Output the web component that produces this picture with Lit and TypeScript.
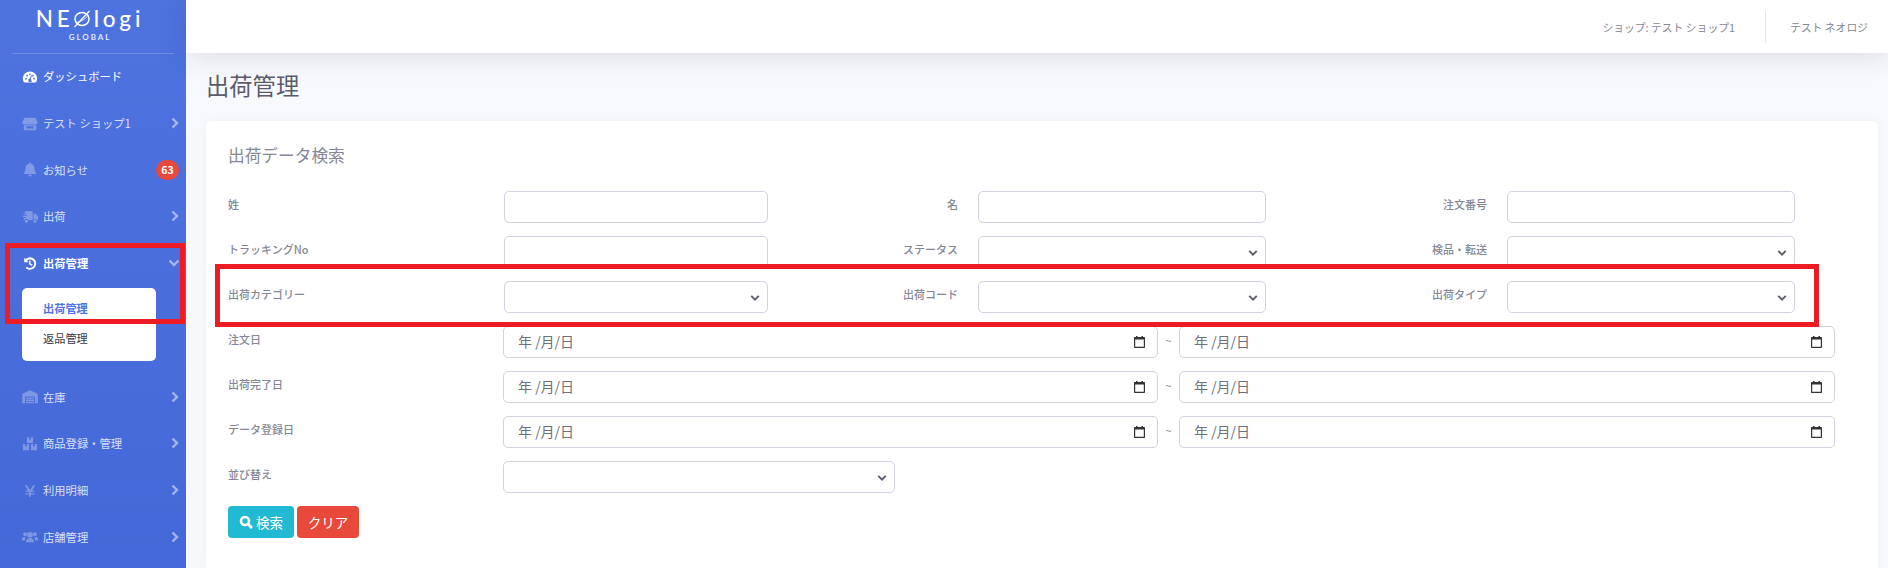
import { LitElement, html, css, svg } from "lit";
import { customElement } from "lit/decorators.js";

const ICONS: Record<string, any> = {
  gauge: svg`<path d="M9 2.500C4.600 2.500 1 6.100 1 10.500c0 1.400.4 2.700 1 3.800.2.300.5.400.8.400h12.400c.3 0 .6-.1.8-.4.6-1.100 1-2.400 1-3.800 0-4.400-3.600-8-8-8zM9 4.500a1 1 0 110 2 1 1 0 010-2zM4.500 11.500a1 1 0 110-2 1 1 0 010 2zm1.200-3.400a1 1 0 110-2 1 1 0 010 2zm5.200 4.900c0 .6-.2 1-.6 1.200H7.700C7.300 12.800 7.100 12.400 7.100 12c0-1 .8-1.800 1.700-1.800l1.400-3.400c.1-.3.4-.4.7-.3.3.1.4.4.3.7l-1.400 3.400c.4.4.6.9.6 1.400zm1.400-4.900a1 1 0 110-2 1 1 0 010 2zM13.500 11.500a1 1 0 110-2 1 1 0 010 2z" fill-rule="evenodd"/>`,
  store: svg`<path d="M3.500 1.500h11c.5 0 1 .3 1.200.8L17.500 6.500c.3 1.200-.6 2.500-2 2.500H2.500c-1.400 0-2.300-1.300-2-2.500l1.800-4.200c.2-.5.7-.8 1.200-.8zM2 10h14v4.500c0 .6-.4 1-1 1H3c-.6 0-1-.4-1-1zm3 1v2.500h8V11z" fill-rule="evenodd"/>`,
  bell: svg`<path d="M7 16a2 2 0 002-2H5a2 2 0 002 2zm6.700-4.700c-.6-.6-1.700-1.600-1.700-4.800 0-2.400-1.700-4.400-4-4.900V1a1 1 0 00-2 0v.6C3.700 2.100 2 4.100 2 6.500c0 3.200-1.100 4.200-1.700 4.800-.2.2-.3.4-.3.700 0 .5.400 1 1 1h12c.6 0 1-.5 1-1 0-.3-.1-.5-.3-.7z"/>`,
  truck: svg`<path d="M3 2h8c.6 0 1 .4 1 1v9H7.200a2.500 2.500 0 00-4.600 0H2V9.500h2.500v-1H1v-1h4.500v-1H1.500v-1H5v-1H3zM13 5h2.200l2.800 3v4h-1a2.500 2.500 0 00-4-.6zM4.900 11.500a1.800 1.800 0 110 3.600 1.800 1.800 0 010-3.600zM14.600 11.500a1.800 1.800 0 110 3.600 1.800 1.800 0 010-3.600z"/>`,
  history: svg`<path d="M9 1a7 7 0 00-4.900 2L2.500 1.500v5h5L5.700 4.700A4.800 4.800 0 119 13a4.800 4.800 0 01-3.400-1.400L4 13a7 7 0 105-12zM8 4.500v4.300l3.200 1.900.8-1.300-2.400-1.500V4.500z" fill-rule="evenodd"/>`,
  warehouse: svg`<path d="M9 1L1 4.500c-.4.2-.7.600-.7 1V15.500h3.200V8h11v7.500h3.200V5.500c0-.4-.3-.8-.7-1zM4.500 9h9v1.500h-9zm0 2.500h9V13h-9zm0 2.500h9v1.500h-9z" fill-rule="evenodd"/>`,
  boxes: svg`<path d="M5.500 1h2.500v2.500h2V1h2.500v6.500h-7zM1 8.500h2.500v2.500h2V8.500H8V15.500H1zM10 8.500h2.500v2.500h2V8.500H17V15.500H10z"/>`,
  yen: svg`<path d="M3 2h2.400L9 7.300 12.600 2H15L11.300 8H14v1.500H10v1.500h4v1.500H10V15H8v-2.500H4V11h4V9.500H4V8h2.700z"/>`,
  users: svg`<circle cx="9" cy="6" r="3.200"/><circle cx="3.500" cy="5.500" r="2.200"/><circle cx="14.500" cy="5.500" r="2.200"/><path d="M4.500 14c0-2.500 2-4.300 4.500-4.300s4.500 1.800 4.500 4.300v.5h-9zM3.300 12.500H0v-2c0-1.200 1-2 2.200-2 .7 0 1.400.2 1.900.7A5.500 5.500 0 003.300 12.500zM14.700 12.500H18v-2c0-1.200-1-2-2.200-2-.7 0-1.400.2-1.900.7a5.500 5.500 0 01.8 2.800z"/>`,
};

const chevronRight = html`<svg class="chev" viewBox="0 0 8 12"><path d="M1.500 1.500L6 6l-4.500 4.500" fill="none" stroke="currentColor" stroke-width="2.400"/></svg>`;
const chevronDown = html`<svg class="chev" viewBox="0 0 12 8"><path d="M1.500 1.500L6 6l4.500-4.500" fill="none" stroke="currentColor" stroke-width="2.400"/></svg>`;

const calendar = html`<svg class="cal" viewBox="0 0 11 12"><path d="M2 0h1.500v1h4V0H9v1h1c.6 0 1 .4 1 1v9c0 .6-.4 1-1 1H1c-.6 0-1-.4-1-1V2c0-.6.4-1 1-1h1zM1.200 3.500v7.300h8.600V3.500z" fill-rule="evenodd"/></svg>`;

@customElement("app-root")
export class AppRoot extends LitElement {
  static styles = css`
    :host {
      display: block;
      position: relative;
      width: 1888px;
      height: 568px;
      overflow: hidden;
      font-family: "Noto Sans CJK JP", "Noto Sans", sans-serif;
      background: #f8f9fc;
      color: #858796;
    }
    .layout { display: flex; height: 568px; }

    .side {
      flex: 0 0 186px;
      background: linear-gradient(180deg, #4e73df 0%, #4568d8 100%);
      color: rgba(255, 255, 255, 0.8);
      display: flex;
      flex-direction: column;
    }
    .brand {
      height: 53px;
      margin: 0 12px;
      padding-right: 6px;
      border-bottom: 1px solid rgba(255, 255, 255, 0.2);
      display: flex;
      flex-direction: column;
      align-items: center;
      color: #fff;
      box-sizing: content-box;
    }
    .brand-main {
      font-family: "Lato", sans-serif;
      font-weight: 500;
      font-size: 22.500px;
      line-height: 20px;
      letter-spacing: 3.800px;
      margin-top: 9px;
      display: flex;
      align-items: center;
      white-space: nowrap;
    }
    .brand-main svg { width: 18px; height: 18px; margin: 0 3px 0 -1px; }
    .brand-sub {
      font-family: "Lato", sans-serif;
      font-size: 8px;
      font-weight: 700;
      line-height: 8px;
      letter-spacing: 1.900px;
      margin-top: 4px;
      color: rgba(255, 255, 255, 0.85);
    }
    .nav { margin-top: -1px; }
    .item {
      height: 46.700px;
      display: flex;
      align-items: center;
      padding: 0 7px 0 22px;
      font-size: 11.300px;
      box-sizing: border-box;
    }
    .item .ic {
      width: 16px;
      height: 15px;
      margin-right: 5px;
      fill: rgba(255, 255, 255, 0.3);
      flex: none;
    }
    .item.on { color: #fff; font-weight: 700; }
    .item.on .ic, .item.white .ic { fill: #fff; }
    .item.white { color: #fff; }
    .item .label { flex: 1; white-space: nowrap; }
    .chev { width: 8px; height: 12px; color: rgba(255, 255, 255, 0.5); flex: none; }
    .item.on .chev { width: 12px; height: 8px; margin-right: -1px; }
    .badge {
      width: 23px;
      height: 20px;
      border-radius: 10px;
      background: #e74a3b;
      color: #fff;
      font-size: 10.500px;
      font-weight: 700;
      display: flex;
      align-items: center;
      justify-content: center;
    }
    .sub-wrap { height: 73px; margin: 1.500px 30px 12.500px 22px; }
    .sub {
      height: 73px;
      background: #fff;
      border-radius: 5px;
      display: flex;
      flex-direction: column;
      padding-top: 5px;
      box-sizing: border-box;
      font-size: 11.200px;
      color: #3a3b45;
    }
    .sub div { height: 30px; line-height: 30px; padding-left: 21px; }
    .sub .active { color: #4e73df; font-weight: 700; }

    .main { flex: 1; min-width: 0; display: flex; flex-direction: column; }
    .top {
      flex: 0 0 53px;
      background: #fff;
      box-shadow: 0 2px 28px rgba(58, 59, 69, 0.16);
      display: flex;
      align-items: center;
      justify-content: flex-end;
      font-size: 10.800px;
      position: relative;
    }
    .top .shop { padding-right: 30px; }
    .top .user { padding: 0 20px 0 24px; border-left: 1px solid #e3e6f0; height: 32px; line-height: 32px; }
    .title {
      margin: 0 0 0 20px;
      height: 68px;
      padding-bottom: 4px;
      box-sizing: border-box;
      display: flex;
      align-items: center;
      font-size: 23.300px;
      font-weight: 400;
      color: #5a5c69;
    }
    .card {
      flex: 1;
      margin: 0 10px 0 20px;
      background: #fff;
      border-radius: 5px 5px 0 0;
      padding: 22px 22px 0 22px;
      box-shadow: 0 0 12px rgba(58, 59, 69, 0.04);
      min-height: 0;
    }
    .card h2 {
      margin: 0 0 24px;
      height: 24px;
      line-height: 24px;
      font-size: 16.700px;
      font-weight: 400;
      color: #858796;
    }
    .rows { display: flex; flex-direction: column; gap: 13px; }
    .grid3 {
      display: grid;
      grid-template-columns: 276px 264px 210px 288px 241px 288px;
    }
    .grid2 {
      display: grid;
      grid-template-columns: 275px 655px 21px 656px;
    }
    .l {
      font-size: 11px;
      font-weight: 500;
      line-height: 16px;
      padding-top: 5px;
      color: #858796;
      white-space: nowrap;
    }
    .l.r { text-align: right; padding-right: 20px; }
    .c {
      height: 32px;
      box-sizing: border-box;
      width: 100%;
      border: 1px solid #d1d3e2;
      border-radius: 5px;
      background: #fff;
      font: inherit;
      margin: 0;
      padding: 0 4px;
      outline: none;
      display: block;
    }
    .sel {
      position: relative;
      display: block;
    }
    .sel .c { appearance: none; -webkit-appearance: none; }
    .sel svg {
      position: absolute;
      right: 8px;
      top: 13px;
      width: 10px;
      height: 8px;
      color: #5e606c;
    }
    .date {
      display: flex;
      align-items: center;
      justify-content: space-between;
      padding: 0 12px 0 14px;
      font-size: 14px;
      color: #6e707e;
    }
    .date span { margin-top: -3px; }
    .cal { width: 11px; height: 12px; fill: #333; }
    .tilde { text-align: center; font-size: 11px; line-height: 28px; color: #858796; }
    .sort { width: 392px; }
    .btns { display: flex; gap: 3px; }
    .btn {
      height: 32px;
      border-radius: 4px;
      color: #fff;
      font-size: 13.500px;
      display: flex;
      align-items: center;
      justify-content: center;
      box-sizing: border-box;
    }
    .btn.s { width: 66px; background: #22b9d3; gap: 3px; }
    .btn.s svg { width: 14px; height: 14px; fill: none; stroke: #fff; }
    .btn.x { width: 62px; background: #e74a3b; }

    .frame {
      position: absolute;
      box-sizing: border-box;
      border: 5px solid #ed1c24;
      pointer-events: none;
    }
    .f1 { left: 5px; top: 243px; width: 180px; height: 81px; }
    .f2 { left: 215px; top: 264px; width: 1604px; height: 63px; }
  `;

  private navItem(icon: string, label: string, opts: { chev?: boolean; white?: boolean } = {}) {
    return html`<div class="item ${opts.white ? "white" : ""}">
      <svg class="ic" viewBox="0 0 18 16">${ICONS[icon]}</svg>
      <span class="label">${label}</span>
      ${opts.chev ? chevronRight : ""}
    </div>`;
  }

  private select(extra = "") {
    return html`<span class="sel ${extra}"><select class="c"><option></option></select>${chevronDown}</span>`;
  }

  private dateRow(label: string) {
    return html`<div class="grid2">
      <div class="l">${label}</div>
      <div class="c date"><span>年 /月/日</span>${calendar}</div>
      <div class="tilde">~</div>
      <div class="c date"><span>年 /月/日</span>${calendar}</div>
    </div>`;
  }

  render() {
    return html`
      <div class="layout">
        <aside class="side">
          <div class="brand">
            <div class="brand-main">NE<svg viewBox="0 0 17 18"><ellipse cx="8.500" cy="9" rx="7" ry="6.500" fill="none" stroke="#fff" stroke-width="1.500"/><path d="M1 17L16 1" stroke="#fff" stroke-width="1.300"/><path d="M2 12c4 1 10-3 13-7" fill="none" stroke="#fff" stroke-width="0.800"/></svg>logi</div>
            <div class="brand-sub">GLOBAL</div>
          </div>
          <nav class="nav">
            ${this.navItem("gauge", "ダッシュボード", { white: true })}
            ${this.navItem("store", "テスト ショップ1", { chev: true })}
            <div class="item">
              <svg class="ic" viewBox="0 0 18 16"><g transform="translate(2,0)">${ICONS.bell}</g></svg>
              <span class="label">お知らせ</span>
              <span class="badge">63</span>
            </div>
            ${this.navItem("truck", "出荷", { chev: true })}
            <div class="item on">
              <svg class="ic" viewBox="0 0 18 16">${ICONS.history}</svg>
              <span class="label">出荷管理</span>
              ${chevronDown}
            </div>
            <div class="sub-wrap">
              <div class="sub">
                <div class="active">出荷管理</div>
                <div>返品管理</div>
              </div>
            </div>
            ${this.navItem("warehouse", "在庫", { chev: true })}
            ${this.navItem("boxes", "商品登録・管理", { chev: true })}
            ${this.navItem("yen", "利用明細", { chev: true })}
            ${this.navItem("users", "店舗管理", { chev: true })}
          </nav>
        </aside>
        <div class="main">
          <header class="top">
            <span class="shop">ショップ: テスト ショップ1</span>
            <span class="user">テスト ネオロジ</span>
          </header>
          <h1 class="title">出荷管理</h1>
          <section class="card">
            <h2>出荷データ検索</h2>
            <div class="rows">
              <div class="grid3">
                <div class="l">姓</div><input class="c" />
                <div class="l r">名</div><input class="c" />
                <div class="l r">注文番号</div><input class="c" />
              </div>
              <div class="grid3">
                <div class="l">トラッキングNo</div><input class="c" />
                <div class="l r">ステータス</div>${this.select()}
                <div class="l r">検品・転送</div>${this.select()}
              </div>
              <div class="grid3">
                <div class="l">出荷カテゴリー</div>${this.select()}
                <div class="l r">出荷コード</div>${this.select()}
                <div class="l r">出荷タイプ</div>${this.select()}
              </div>
              ${this.dateRow("注文日")}
              ${this.dateRow("出荷完了日")}
              ${this.dateRow("データ登録日")}
              <div class="grid2">
                <div class="l">並び替え</div>
                ${this.select("sort")}
              </div>
              <div class="btns">
                <div class="btn s"><svg viewBox="0 0 14 14"><circle cx="6" cy="6" r="4" stroke-width="2.600"/><path d="M9 9l4 4" stroke-width="3"/></svg>検索</div>
                <div class="btn x">クリア</div>
              </div>
            </div>
          </section>
        </div>
      </div>
      <div class="frame f1"></div>
      <div class="frame f2"></div>
    `;
  }
}
